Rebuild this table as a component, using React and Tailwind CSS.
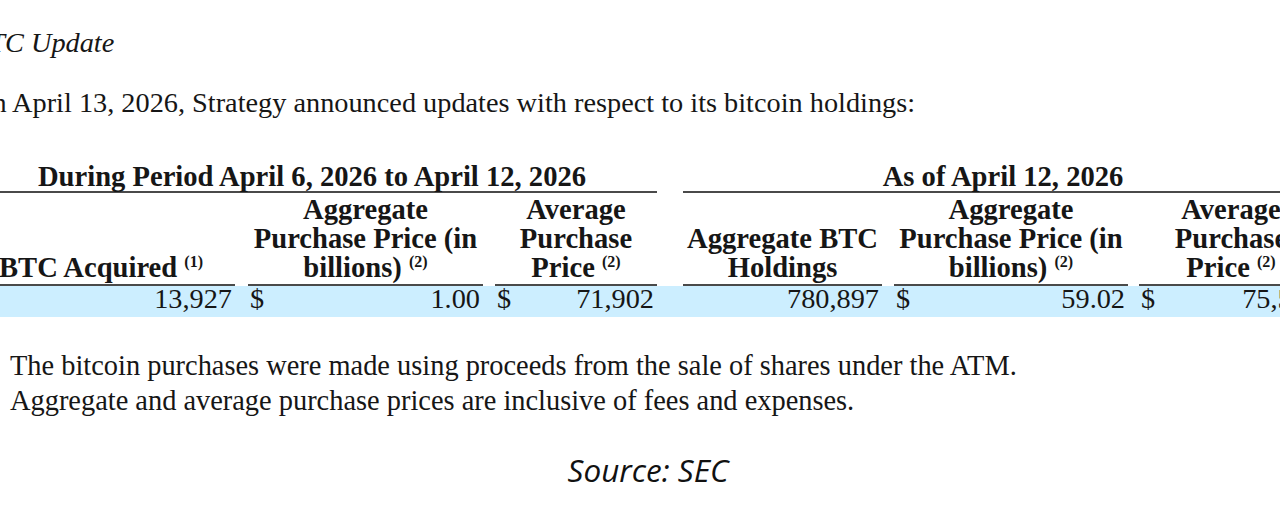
const grid =
	"grid grid-cols-[268px_13px_235px_12px_162px_26px_199px_12px_234px_11px_184px]";

const Sup = ({ n }) => (
	<span className="relative -top-[10px] text-[16px] leading-none">({n})</span>
);

const HeadCell = ({ children, className = "" }) => (
	<div
		className={`border-b-2 border-[#4a4a4a] pb-[2px] text-center text-[28.6px] font-bold leading-[29px] ${className}`}>
		{children}
	</div>
);

const Money = ({ value, dollar }) => (
	<div className="flex justify-between pl-[2px] pr-[3px]">
		<span>{dollar ? "$" : ""}</span>
		<span>{value}</span>
	</div>
);

export default function App() {
	return (
		<div className="relative h-[512px] w-[1280px] overflow-hidden bg-white text-[#161616] font-['Liberation_Serif',serif] text-[28.3px]">
			<div className="ml-[-33px] pt-[25px]">
				<h1 className="pl-[5px] italic leading-[35px]">BTC Update</h1>
				<p className="mt-[25px] pl-[5px] leading-[35px]">
					On April 13, 2026, Strategy announced updates with respect
					to its bitcoin holdings:
				</p>

				<div className={`${grid} mt-[42px] text-[28.6px]`}>
					<div className="col-span-5 border-b-2 border-[#4a4a4a] text-center font-bold leading-[29px]">
						During Period April 6, 2026 to April 12, 2026
					</div>
					<div className="col-span-5 col-start-7 border-b-2 border-[#4a4a4a] text-center font-bold leading-[29px]">
						As of April 12, 2026
					</div>
				</div>

				<div className={`${grid} items-end pt-[2px]`}>
					<HeadCell>
						BTC Acquired <Sup n={1} />
					</HeadCell>
					<div />
					<HeadCell>
						Aggregate
						<br />
						Purchase Price (in
						<br />
						billions) <Sup n={2} />
					</HeadCell>
					<div />
					<HeadCell>
						Average
						<br />
						Purchase
						<br />
						Price <Sup n={2} />
					</HeadCell>
					<div />
					<HeadCell>
						Aggregate BTC
						<br />
						Holdings
					</HeadCell>
					<div />
					<HeadCell>
						Aggregate
						<br />
						Purchase Price (in
						<br />
						billions) <Sup n={2} />
					</HeadCell>
					<div />
					<HeadCell>
						Average
						<br />
						Purchase
						<br />
						Price <Sup n={2} />
					</HeadCell>
				</div>

				<div className={`${grid} h-[31px] bg-[#cceeff] leading-[25px]`}>
					<Money value="13,927" />
					<div />
					<Money value="1.00" dollar />
					<div />
					<Money value="71,902" dollar />
					<div />
					<Money value="780,897" />
					<div />
					<Money value="59.02" dollar />
					<div />
					<Money value="75,577" dollar />
				</div>

				<div className="mt-[31px] text-[28.4px] leading-[35px]">
					<div className="flex">
						<span className="w-[43px] shrink-0">(1)</span>
						<span>
							The bitcoin purchases were made using proceeds from the
							sale of shares under the ATM.
						</span>
					</div>
					<div className="flex">
						<span className="w-[43px] shrink-0">(2)</span>
						<span>
							Aggregate and average purchase prices are inclusive of
							fees and expenses.
						</span>
					</div>
				</div>
			</div>

			<p className="mt-[31px] pl-[16px] text-center font-['Open_Sans',sans-serif] text-[31.5px] italic leading-[42px] text-[#111]">
				Source: SEC
			</p>
		</div>
	);
}
